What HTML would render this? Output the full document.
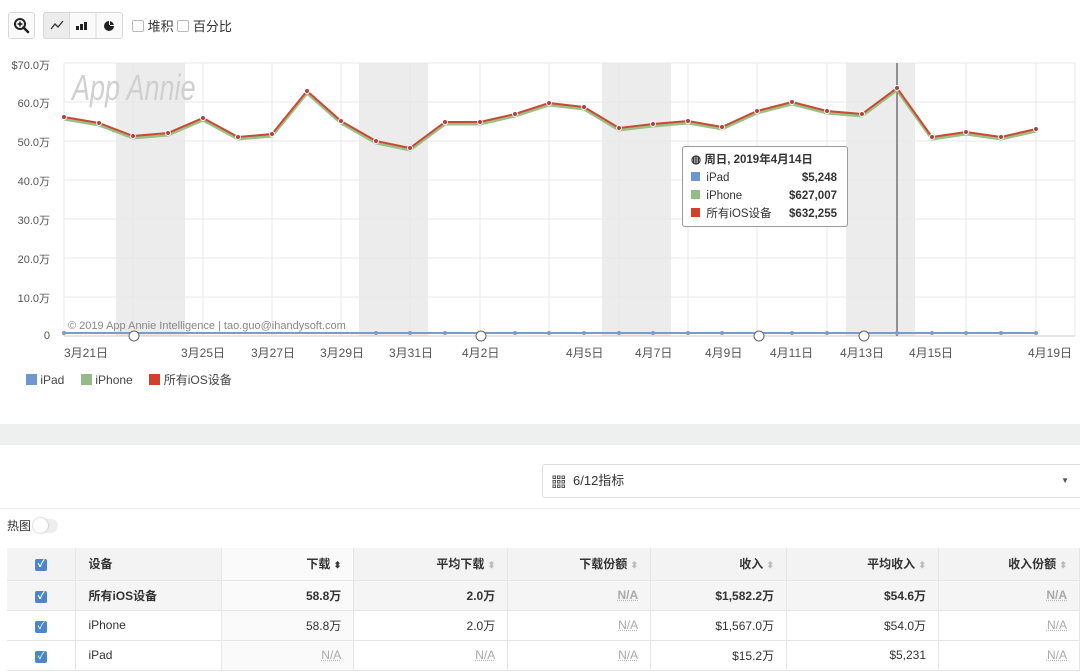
<!DOCTYPE html>
<html><head><meta charset="utf-8"><style>
*{box-sizing:border-box;margin:0;padding:0}
body{width:1080px;height:672px;overflow:hidden;background:#fff;font-family:"Liberation Sans","Noto Sans CJK SC",sans-serif;color:#333;position:relative}
.abs{position:absolute}
.btn{position:absolute;top:12px;height:27px;border:1px solid #d8d8d8;border-radius:3px;background:#fafafa}
.cb{display:inline-block;width:12px;height:12px;border:1px solid #bbb;border-radius:2px;vertical-align:-1px;background:#fff}
.tick{position:absolute;top:344px;font-size:12px;color:#555}
.yl{position:absolute;left:0;width:50px;text-align:right;font-size:11px;color:#555}
table{position:absolute;left:7px;top:548px;border-collapse:collapse;font-size:12px}
td{height:30px;border-bottom:1px solid #e6e6e6;border-right:1px solid #e6e6e6;padding:0 12px;text-align:right;white-space:nowrap}
tr.h td{background:#f3f3f3;font-weight:bold;height:32px}
tr.b td{background:#f5f5f5;font-weight:bold}
td.l{text-align:left}
td.c{text-align:center}
.na{color:#aaa;text-decoration:underline dotted #bbb;font-weight:normal}
tr.b .na{font-weight:bold}
.ck{display:inline-block;width:12px;height:12px;background:#4a86c8;border-radius:2px;color:#fff;font-size:10px;line-height:12px;text-align:center}
.s{color:#bbb;font-size:9px}
</style></head><body>
<div class="btn" style="left:8px;width:27px;"><svg width="25" height="25"><circle cx="11" cy="11" r="5" fill="none" stroke="#222" stroke-width="2"/><line x1="14.5" y1="14.5" x2="19" y2="19" stroke="#222" stroke-width="2.6" stroke-linecap="round"/><line x1="8.5" y1="11" x2="13.5" y2="11" stroke="#222" stroke-width="1.6"/><line x1="11" y1="8.5" x2="11" y2="13.5" stroke="#222" stroke-width="1.6"/></svg></div>
<div class="btn" style="left:43px;width:80px;"></div>
<div class="abs" style="left:43px;top:12px;width:27px;height:27px;background:#ececec;border:1px solid #d8d8d8;border-radius:3px 0 0 3px"></div>
<svg class="abs" style="left:43px;top:12px" width="80" height="27"><path d="M8 17 L12 12 L15 15 L20 9" stroke="#333" stroke-width="1.3" fill="none"/><line x1="53" y1="1" x2="53" y2="26" stroke="#d8d8d8"/><rect x="33" y="14" width="3" height="4" fill="#222"/><rect x="37" y="12" width="3" height="6" fill="#222"/><rect x="41" y="10" width="3" height="8" fill="#222"/><circle cx="66" cy="14" r="5" fill="#222"/><path d="M66 14 L71 14 L71 13 L66 13Z M66 14 L66 8 L67 8 L67 14Z" fill="#fff"/></svg>
<div class="abs" style="left:132px;top:16px;font-size:13px"><span class="cb"></span> 堆积 <span class="cb"></span> 百分比</div>

<div class="yl" style="top:57px">$70.0万</div>
<div class="yl" style="top:95px">60.0万</div>
<div class="yl" style="top:134px">50.0万</div>
<div class="yl" style="top:173px">40.0万</div>
<div class="yl" style="top:212px">30.0万</div>
<div class="yl" style="top:251px">20.0万</div>
<div class="yl" style="top:290px">10.0万</div>
<div class="yl" style="top:330px">0</div>

<svg class="abs" style="left:0;top:0" width="1080" height="420">
<g fill="#ececec"><rect x="116" y="63" width="69" height="273"/><rect x="359" y="63" width="69" height="273"/><rect x="602" y="63" width="69" height="273"/><rect x="846" y="63" width="69" height="273"/></g>
<g stroke="#e8e8e8" stroke-width="1">
<line x1="64" y1="63" x2="1075" y2="63"/><line x1="64" y1="102" x2="1075" y2="102"/><line x1="64" y1="141" x2="1075" y2="141"/><line x1="64" y1="180" x2="1075" y2="180"/><line x1="64" y1="219" x2="1075" y2="219"/><line x1="64" y1="258" x2="1075" y2="258"/><line x1="64" y1="297" x2="1075" y2="297"/>
<line x1="64" y1="63" x2="64" y2="336"/><line x1="133" y1="63" x2="133" y2="336"/><line x1="203" y1="63" x2="203" y2="336"/><line x1="272" y1="63" x2="272" y2="336"/><line x1="341" y1="63" x2="341" y2="336"/><line x1="410" y1="63" x2="410" y2="336"/><line x1="480" y1="63" x2="480" y2="336"/><line x1="549" y1="63" x2="549" y2="336"/><line x1="619" y1="63" x2="619" y2="336"/><line x1="688" y1="63" x2="688" y2="336"/><line x1="757" y1="63" x2="757" y2="336"/><line x1="827" y1="63" x2="827" y2="336"/><line x1="897" y1="63" x2="897" y2="336"/><line x1="966" y1="63" x2="966" y2="336"/><line x1="1036" y1="63" x2="1036" y2="336"/><line x1="1075" y1="63" x2="1075" y2="336"/>
</g>
<line x1="64" y1="336" x2="1075" y2="336" stroke="#ccc"/>
<text x="0" y="0" font-family="Liberation Sans" font-style="italic" font-size="36" fill="#d0d0d0" transform="translate(72 100) scale(0.75 1)">App Annie</text>
<line x1="897" y1="63" x2="897" y2="336" stroke="#555" stroke-width="1.2"/>
<polyline fill="none" stroke="#9bbf85" stroke-width="3" points="64,119 99,125 133,138 168,135 203,120 238,139 272,136 307,93 341,123 376,143 410,150 445,124 480,124 515,116 549,105 584,109 619,130 653,126 688,123 722,129 757,113 792,104 827,113 862,116 897,90 932,139 966,134 1001,139 1036,131"/>
<polyline fill="none" stroke="#c94a32" stroke-width="2" points="64,117 99,123 133,136 168,133 203,118 238,137 272,134 307,91 341,121 376,141 410,148 445,122 480,122 515,114 549,103 584,107 619,128 653,124 688,121 722,127 757,111 792,102 827,111 862,114 897,88 932,137 966,132 1001,137 1036,129"/>
<g fill="#b04040" stroke="#fff" stroke-width="1"><circle cx="64" cy="117" r="2.5"/><circle cx="99" cy="123" r="2.5"/><circle cx="133" cy="136" r="2.5"/><circle cx="168" cy="133" r="2.5"/><circle cx="203" cy="118" r="2.5"/><circle cx="238" cy="137" r="2.5"/><circle cx="272" cy="134" r="2.5"/><circle cx="307" cy="91" r="2.5"/><circle cx="341" cy="121" r="2.5"/><circle cx="376" cy="141" r="2.5"/><circle cx="410" cy="148" r="2.5"/><circle cx="445" cy="122" r="2.5"/><circle cx="480" cy="122" r="2.5"/><circle cx="515" cy="114" r="2.5"/><circle cx="549" cy="103" r="2.5"/><circle cx="584" cy="107" r="2.5"/><circle cx="619" cy="128" r="2.5"/><circle cx="653" cy="124" r="2.5"/><circle cx="688" cy="121" r="2.5"/><circle cx="722" cy="127" r="2.5"/><circle cx="757" cy="111" r="2.5"/><circle cx="792" cy="102" r="2.5"/><circle cx="827" cy="111" r="2.5"/><circle cx="862" cy="114" r="2.5"/><circle cx="897" cy="88" r="2.5"/><circle cx="932" cy="137" r="2.5"/><circle cx="966" cy="132" r="2.5"/><circle cx="1001" cy="137" r="2.5"/><circle cx="1036" cy="129" r="2.5"/></g>
<line x1="64" y1="333" x2="1036" y2="333" stroke="#7a9cc8" stroke-width="2"/>
<g fill="#7a9cc8"><circle cx="64" cy="333" r="2"/><circle cx="376" cy="333" r="2"/><circle cx="410" cy="333" r="2"/><circle cx="445" cy="333" r="2"/><circle cx="480" cy="333" r="2"/><circle cx="515" cy="333" r="2"/><circle cx="549" cy="333" r="2"/><circle cx="584" cy="333" r="2"/><circle cx="619" cy="333" r="2"/><circle cx="653" cy="333" r="2"/><circle cx="688" cy="333" r="2"/><circle cx="722" cy="333" r="2"/><circle cx="792" cy="333" r="2"/><circle cx="827" cy="333" r="2"/><circle cx="897" cy="333" r="2"/><circle cx="932" cy="333" r="2"/><circle cx="966" cy="333" r="2"/><circle cx="1001" cy="333" r="2"/><circle cx="1036" cy="333" r="2"/></g>
<g fill="#fff" stroke="#666"><circle cx="134" cy="336" r="5"/><circle cx="481" cy="336" r="5"/><circle cx="759" cy="336" r="5"/><circle cx="864" cy="336" r="5"/></g>
<text x="68" y="329" font-size="11" fill="#888" font-family="Liberation Sans">© 2019 App Annie Intelligence | tao.guo@ihandysoft.com</text>
</svg>

<div class="tick" style="left:64px">3月21日</div><div class="tick" style="left:181px">3月25日</div><div class="tick" style="left:251px">3月27日</div><div class="tick" style="left:320px">3月29日</div><div class="tick" style="left:389px">3月31日</div><div class="tick" style="left:462px">4月2日</div><div class="tick" style="left:566px">4月5日</div><div class="tick" style="left:635px">4月7日</div><div class="tick" style="left:705px">4月9日</div><div class="tick" style="left:770px">4月11日</div><div class="tick" style="left:840px">4月13日</div><div class="tick" style="left:909px">4月15日</div><div class="tick" style="left:1028px">4月19日</div>

<div class="abs" style="left:26px;top:371px;font-size:12px;color:#444"><span style="display:inline-block;width:11px;height:11px;background:#6f97cf;vertical-align:-1px"></span> iPad &nbsp;&nbsp;&nbsp; <span style="display:inline-block;width:11px;height:11px;background:#95bb86;vertical-align:-1px"></span> iPhone &nbsp;&nbsp;&nbsp; <span style="display:inline-block;width:11px;height:11px;background:#d0402c;vertical-align:-1px"></span> 所有iOS设备</div>

<div class="abs" style="left:682px;top:146px;width:166px;height:81px;background:#fff;border:1px solid #999;border-radius:3px;font-size:11.5px;padding:4px 10px 0 8px;line-height:18px">
<div style="font-weight:bold">◍ 周日, 2019年4月14日</div>
<div><span style="display:inline-block;width:9px;height:9px;background:#6f97cf"></span>&nbsp; iPad<b style="float:right">$5,248</b></div>
<div><span style="display:inline-block;width:9px;height:9px;background:#95bb86"></span>&nbsp; iPhone<b style="float:right">$627,007</b></div>
<div><span style="display:inline-block;width:9px;height:9px;background:#d0402c"></span>&nbsp; 所有iOS设备<b style="float:right">$632,255</b></div>
</div>

<div class="abs" style="left:0;top:424px;width:1080px;height:21px;background:#eef0f0"></div>
<div class="abs" style="left:542px;top:464px;width:540px;height:34px;border:1px solid #ddd;border-radius:3px;font-size:13px;line-height:32px;padding-left:30px;color:#333">6/12指标<span style="position:absolute;right:12px;font-size:8px;color:#555">▼</span>
<svg style="position:absolute;left:9px;top:10px" width="14" height="14"><g fill="none" stroke="#555" stroke-width="1"><rect x="1" y="1" width="2.5" height="2.5"/><rect x="5.5" y="1" width="2.5" height="2.5"/><rect x="10" y="1" width="2.5" height="2.5"/><rect x="1" y="5.5" width="2.5" height="2.5"/><rect x="5.5" y="5.5" width="2.5" height="2.5"/><rect x="10" y="5.5" width="2.5" height="2.5"/><rect x="1" y="10" width="2.5" height="2.5"/><rect x="5.5" y="10" width="2.5" height="2.5"/><rect x="10" y="10" width="2.5" height="2.5"/></g></svg></div>
<div class="abs" style="left:0;top:508px;width:1080px;height:1px;background:#eee"></div>
<div class="abs" style="left:7px;top:517px;font-size:12px">热图</div>
<div class="abs" style="left:33px;top:519px;width:25px;height:14px;border-radius:7px;background:#eee"></div>
<div class="abs" style="left:33px;top:518px;width:15px;height:15px;border-radius:8px;background:#fff;box-shadow:0 0 2px #aaa"></div>

<table>
<tr class="h"><td class="c" style="width:69px"><span class="ck">✓</span></td><td class="l" style="width:146px">设备</td><td style="width:132px;background:#fafafa">下载 <span style="font-size:9px">⬍</span></td><td style="width:154px">平均下载 <span class="s">⬍</span></td><td style="width:143px">下载份额 <span class="s">⬍</span></td><td style="width:136px">收入 <span class="s">⬍</span></td><td style="width:152px">平均收入 <span class="s">⬍</span></td><td style="width:141px">收入份额 <span class="s">⬍</span></td></tr>
<tr class="b"><td class="c"><span class="ck">✓</span></td><td class="l">所有iOS设备</td><td style="background:#fafafa">58.8万</td><td>2.0万</td><td><span class="na">N/A</span></td><td>$1,582.2万</td><td>$54.6万</td><td><span class="na">N/A</span></td></tr>
<tr><td class="c"><span class="ck">✓</span></td><td class="l">iPhone</td><td style="background:#fafafa">58.8万</td><td>2.0万</td><td><span class="na">N/A</span></td><td>$1,567.0万</td><td>$54.0万</td><td><span class="na">N/A</span></td></tr>
<tr><td class="c"><span class="ck">✓</span></td><td class="l">iPad</td><td style="background:#fafafa"><span class="na">N/A</span></td><td><span class="na">N/A</span></td><td><span class="na">N/A</span></td><td>$15.2万</td><td>$5,231</td><td><span class="na">N/A</span></td></tr>
</table>
</body></html>
